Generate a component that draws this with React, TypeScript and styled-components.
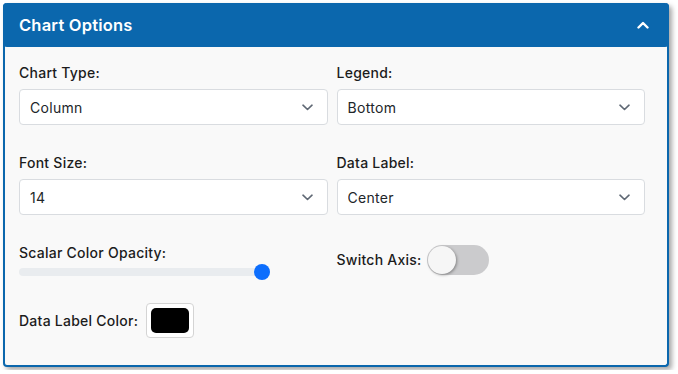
import React, { useState } from 'react';
import styled, { createGlobalStyle } from 'styled-components';

const GlobalStyle = createGlobalStyle`
    html, body {
        margin: 0;
        padding: 0;
        background: #ffffff;
    }
    body {
        font-family: Inter, "Noto Sans", "Liberation Sans", sans-serif;
        color: #212529;
    }
`;

const Page = styled.div`
    padding: 3px;
`;

const Panel = styled.section`
    box-sizing: border-box;
    width: 666px;
    height: 364px;
    background: #f9f9f9;
    border: 2px solid #0b67ad;
    border-top: none;
    border-radius: 4px;
    box-shadow: 3px 3px 5px rgba(0, 0, 0, 0.35);
    display: flex;
    flex-direction: column;
`;

const Header = styled.button`
    margin: 0 -2px;
    height: 44px;
    padding: 0 20px 0 16px;
    border: none;
    border-radius: 4px;
    background: #0b67ad;
    color: #ffffff;
    display: flex;
    align-items: center;
    justify-content: space-between;
    font-family: inherit;
    font-size: 16.5px;
    font-weight: 600;
    letter-spacing: 0.2px;
    cursor: pointer;
`;

const Body = styled.div`
    padding: 16px 22px 0 14px;
    display: flex;
    flex-direction: column;
`;

const Grid = styled.div`
    display: grid;
    grid-template-columns: 1fr 1fr;
    column-gap: 9px;
    row-gap: 28px;
`;

const Field = styled.div`
    display: flex;
    flex-direction: column;
`;

const InlineField = styled.div<{ $top?: number }>`
    align-self: start;
    display: flex;
    align-items: center;
    gap: 5px;
    padding-top: ${(p) => p.$top ?? 0}px;
`;

const Label = styled.label<{ $gap?: number }>`
    font-size: 14px;
    font-weight: 500;
    line-height: 20px;
    letter-spacing: 0.25px;
    color: #1c1c1c;
    margin-bottom: ${(p) => p.$gap ?? 0}px;
`;

const SelectWrap = styled.div`
    position: relative;
    height: 36px;
`;

const Select = styled.select`
    appearance: none;
    box-sizing: border-box;
    width: 100%;
    height: 36px;
    padding: 0 36px 0 10px;
    background: #ffffff;
    border: 1px solid #d9dce0;
    border-radius: 4px;
    font-family: inherit;
    font-size: 14px;
    letter-spacing: 0.3px;
    color: #212529;
    outline: none;
`;

const Chevron = styled.svg`
    position: absolute;
    right: 15px;
    top: 15px;
    pointer-events: none;
`;

const SliderWrap = styled.div`
    height: 16px;
    display: flex;
    align-items: center;
    padding-top: 1px;
`;

const Range = styled.input`
    -webkit-appearance: none;
    appearance: none;
    width: 251px;
    height: 16px;
    margin: 0;
    background: transparent;

    &::-webkit-slider-runnable-track {
        height: 8px;
        border-radius: 4px;
        background: #e9ecef;
    }
    &::-webkit-slider-thumb {
        -webkit-appearance: none;
        width: 16px;
        height: 16px;
        margin-top: -4px;
        border-radius: 50%;
        border: none;
        background: #0d6efd;
    }
`;

const SwitchTrack = styled.button<{ $on: boolean }>`
    position: relative;
    width: 62px;
    height: 30px;
    padding: 0;
    border: none;
    border-radius: 15px;
    background: ${(p) => (p.$on ? '#0b67ad' : '#cbcbcd')};
    cursor: pointer;
`;

const SwitchKnob = styled.span<{ $on: boolean }>`
    position: absolute;
    top: 1px;
    left: ${(p) => (p.$on ? '33px' : '1px')};
    width: 28px;
    height: 28px;
    border-radius: 50%;
    background: #f6f6f6;
    box-shadow: 1px 1px 3px rgba(0, 0, 0, 0.35);
    transition: left 0.2s ease;
`;

const ColorRow = styled.div`
    display: flex;
    align-items: center;
    gap: 8px;
    margin-top: 23px;
`;

const ColorInput = styled.input`
    -webkit-appearance: none;
    appearance: none;
    box-sizing: border-box;
    width: 48px;
    height: 35px;
    padding: 4px;
    background: #ffffff;
    border: 1px solid #d4d4d4;
    border-radius: 4px;
    cursor: pointer;

    &::-webkit-color-swatch-wrapper {
        padding: 0;
    }
    &::-webkit-color-swatch {
        border: none;
        border-radius: 5px;
    }
`;

const ChevronDown = () => (
    <Chevron width="11" height="7" viewBox="0 0 11 7">
        <path d="M1 1.2 L5.5 5.5 L10 1.2" fill="none" stroke="#5f6874" strokeWidth="1.6" strokeLinecap="round" strokeLinejoin="round" />
    </Chevron>
);

const SelectField: React.FC<{ label: string; value: string; options: string[] }> = ({ label, value, options }) => (
    <Field>
        <Label $gap={6}>{label}</Label>
        <SelectWrap>
            <Select defaultValue={value}>
                {options.map((o) => (
                    <option key={o}>{o}</option>
                ))}
            </Select>
            <ChevronDown />
        </SelectWrap>
    </Field>
);

const App: React.FC = () => {
    const [axis, setAxis] = useState(false);
    const [opacity, setOpacity] = useState(100);

    return (
        <Page>
            <GlobalStyle />
            <Panel>
                <Header>
                    <span>Chart Options</span>
                    <svg width="12" height="8" viewBox="0 0 12 8">
                        <path d="M1.5 6.5 L6 2 L10.5 6.5" fill="none" stroke="#ffffff" strokeWidth="2.4" strokeLinecap="round" strokeLinejoin="round" />
                    </svg>
                </Header>
                <Body>
                    <Grid>
                        <SelectField label="Chart Type:" value="Column" options={['Column', 'Bar', 'Line', 'Pie']} />
                        <SelectField label="Legend:" value="Bottom" options={['Top', 'Bottom', 'Left', 'Right']} />
                        <SelectField label="Font Size:" value="14" options={['10', '12', '14', '16', '18']} />
                        <SelectField label="Data Label:" value="Center" options={['Center', 'Inside End', 'Outside End']} />
                        <Field>
                            <Label>Scalar Color Opacity:</Label>
                            <SliderWrap>
                                <Range
                                    type="range"
                                    min={0}
                                    max={100}
                                    value={opacity}
                                    onChange={(e) => setOpacity(Number(e.target.value))}
                                />
                            </SliderWrap>
                        </Field>
                        <InlineField $top={2}>
                            <Label>Switch Axis:</Label>
                            <SwitchTrack $on={axis} onClick={() => setAxis(!axis)}>
                                <SwitchKnob $on={axis} />
                            </SwitchTrack>
                        </InlineField>
                    </Grid>
                    <ColorRow>
                        <Label>Data Label Color:</Label>
                        <ColorInput type="color" defaultValue="#000000" />
                    </ColorRow>
                </Body>
            </Panel>
        </Page>
    );
};

export default App;
